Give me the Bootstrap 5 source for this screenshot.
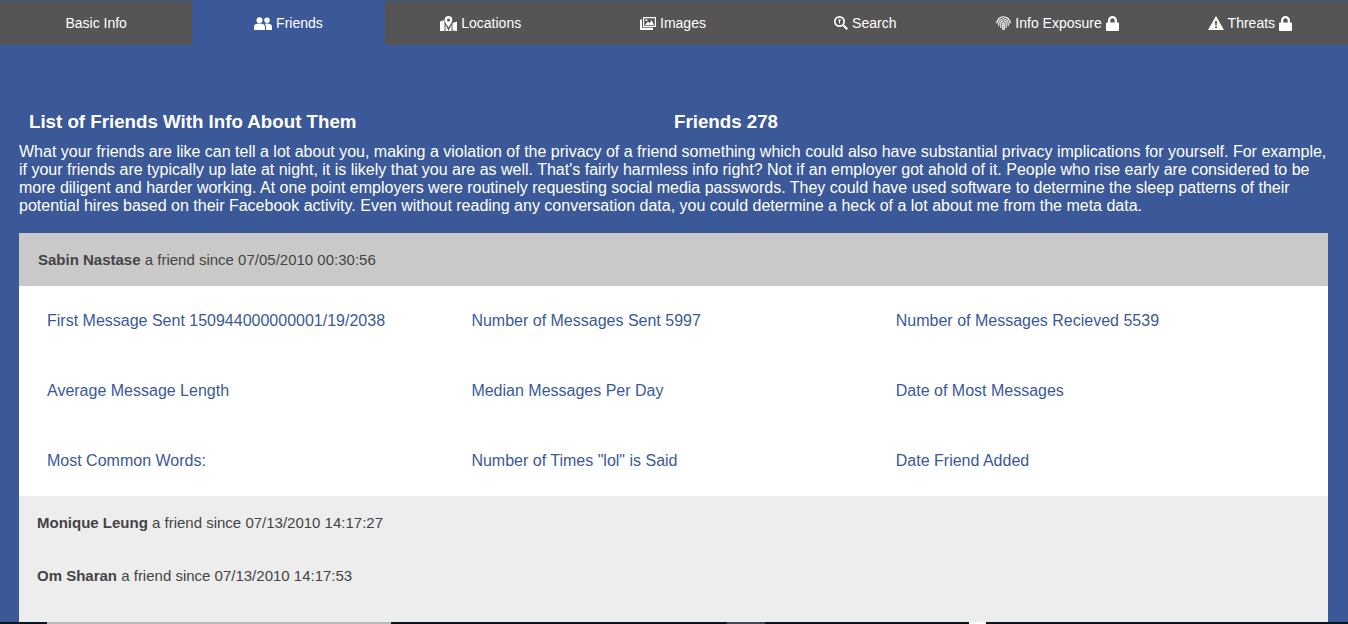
<!DOCTYPE html>
<html lang="en">
<head>
    <meta charset="UTF-8">
    <title>Friends</title>
    <link href="https://cdn.jsdelivr.net/npm/bootstrap@5.3.0/dist/css/bootstrap.min.css" rel="stylesheet">
    <style>
        html, body { height: 100%; overflow: hidden; }
        body { background: #3b5998; font-family: "Liberation Sans", Arial, sans-serif; color: #fff; }
        .top-tabs { background: #555; margin-top: 1px; height: 44px; padding-right: 2px; }
        .top-tabs a { flex: 1 1 0; color: #fff; font-size: 14px; text-decoration: none; display: flex; align-items: center; justify-content: center; gap: 4px; }
        .top-tabs a.current { background: #3b5998; }
        .top-tabs svg { fill: #fff; display: block; }
        .page-wrap { padding: 66px 20px 0 19px; }
        .page-heads { font-size: 18.72px; font-weight: 700; line-height: 21px; }
        .page-heads div:first-child { padding-left: 10px; width: 655px; }
        .intro-text { font-size: 16px; line-height: 18px; margin: 11px 0 18px; }
        .friend-open { background: #c9c9c9; color: #444; height: 53px; font-size: 15px; padding: 2px 0 0 19px; }
        .stats-box { background: #fff; color: #3b5998; font-size: 16px; padding-left: 28px; }
        .stats-box .stat-cell { width: 424.4px; height: 70px; display: flex; align-items: center; }
        .friend-closed { background: #ededed; color: #444; font-size: 15px; padding: 2px 0 0 18px; height: 53px; }
        .friend-closed.last { height: 70px; }
        .bottom-strip { position: fixed; left: 0; right: 0; bottom: 0; height: 2px; background: #08171c; display: flex; }
        .strip-a { width: 47px; }
        .strip-b { width: 344px; background: #b9bbbb; }
        .strip-c { width: 336px; }
        .strip-d { width: 38px; background: #3b4a50; }
        .strip-e { width: 204px; }
        .strip-f { width: 17px; background: #fff; }
    </style>
</head>
<body>

    <nav class="top-tabs d-flex">
        <a href="#">Basic Info</a>
        <a href="#" class="current">
            <svg width="18" height="13" viewBox="0 0 18 13"><circle cx="5.500" cy="3.200" r="3"/><circle cx="13" cy="3.200" r="2.700"/><path d="M0 13V10C0 7.500 2 6.600 5.500 6.600S11 7.500 11 10v3zM12 13V9.600c0-1.200-.4-2-1.200-2.600.7-.3 1.400-.4 2.200-.4 3 0 5 1 5 3.200V13z"/></svg>
            Friends
        </a>
        <a href="#">
            <svg width="17" height="15" viewBox="0 0 17 15"><path d="M0 5.500 4.500 4v11L0 15zM12.500 7 17 5.500V15l-4.500-.5zM5.500 8.500l3 6.500 3-6.500V15H5.500z"/><path fill-rule="evenodd" d="M8.500 0A4 4 0 0 0 4.700 4c0 2 2 4.500 3.800 7.500C10.300 8.500 12.300 6 12.300 4A4 4 0 0 0 8.500 0zm0 2.500a1.500 1.500 0 1 1 0 3 1.500 1.500 0 0 1 0-3z"/></svg>
            Locations
        </a>
        <a href="#">
            <svg width="16" height="13" viewBox="0 0 16 13"><path fill-rule="evenodd" d="M3 0h13v10H3zm1.200 1.200v7.600h10.600V1.200z"/><path d="M5 8 8 4.500l1.800 1.800L11.500 3 14 8zM5.500 2.200h1.800v1.800H5.500zM0 2.500h2v8.300h11V13H0z"/></svg>
            Images
        </a>
        <a href="#">
            <svg width="14" height="14" viewBox="0 0 14 14"><path fill-rule="evenodd" d="M5.500 0a5.500 5.500 0 1 1 0 11 5.500 5.500 0 0 1 0-11zm0 1.700a3.800 3.800 0 1 0 0 7.600 3.800 3.800 0 0 0 0-7.600z"/><path d="M8.800 10.300l1.500-1.500L14 12.500 12.500 14zM4 3.500h3v1H6v3H5v-3H4z"/></svg>
            Search
        </a>
        <a href="#">
            <svg width="15" height="16" viewBox="0 0 15 16"><path fill="none" stroke="#fff" stroke-width="1.100" d="M.8 8.500a6.700 6.700 0 0 1 13.400 0M2.800 11V8.500a4.700 4.700 0 0 1 9.400 0V11M4.800 13V8.500a2.700 2.700 0 0 1 5.400 0V13M6.800 15V8.500a.7.7 0 0 1 1.400 0V15"/></svg>
            Info Exposure
            <svg width="13" height="15" viewBox="0 0 13 15"><path fill-rule="evenodd" d="M2 6.500V4.500a4.500 4.500 0 0 1 9 0v2h1a1 1 0 0 1 1 1V14a1 1 0 0 1-1 1H1a1 1 0 0 1-1-1V7.500a1 1 0 0 1 1-1zm2.300 0h4.400V4.500a2.200 2.200 0 0 0-4.400 0z"/></svg>
        </a>
        <a href="#">
            <svg width="16" height="14" viewBox="0 0 16 14"><path fill-rule="evenodd" d="M8 0l8 14H0zM7 5l.3 4.500h1.400L9 5zm0 5.500V12h2v-1.500z"/></svg>
            Threats
            <svg width="13" height="15" viewBox="0 0 13 15"><path fill-rule="evenodd" d="M2 6.500V4.500a4.500 4.500 0 0 1 9 0v2h1a1 1 0 0 1 1 1V14a1 1 0 0 1-1 1H1a1 1 0 0 1-1-1V7.500a1 1 0 0 1 1-1zm2.300 0h4.400V4.500a2.200 2.200 0 0 0-4.400 0z"/></svg>
        </a>
    </nav>

    <div class="page-wrap">
        <div class="page-heads d-flex">
            <div>List of Friends With Info About Them</div>
            <div>Friends 278</div>
        </div>
        <p class="intro-text">What your friends are like can tell a lot about you, making a violation of the privacy of a friend something which could also have substantial privacy implications for yourself. For example, if your friends are typically up late at night, it is likely that you are as well. That's fairly harmless info right? Not if an employer got ahold of it. People who rise early are considered to be more diligent and harder working. At one point employers were routinely requesting social media passwords. They could have used software to determine the sleep patterns of their potential hires based on their Facebook activity. Even without reading any conversation data, you could determine a heck of a lot about me from the meta data.</p>

        <div class="friend-open d-flex align-items-center"><div><b>Sabin Nastase</b> a friend since 07/05/2010 00:30:56</div></div>
        <div class="stats-box d-flex flex-wrap">
            <div class="stat-cell">First Message Sent 150944000000001/19/2038</div>
            <div class="stat-cell">Number of Messages Sent 5997</div>
            <div class="stat-cell">Number of Messages Recieved 5539</div>
            <div class="stat-cell">Average Message Length</div>
            <div class="stat-cell">Median Messages Per Day</div>
            <div class="stat-cell">Date of Most Messages</div>
            <div class="stat-cell">Most Common Words:</div>
            <div class="stat-cell">Number of Times "lol" is Said</div>
            <div class="stat-cell">Date Friend Added</div>
        </div>
        <div class="friend-closed d-flex align-items-center"><div><b>Monique Leung</b> a friend since 07/13/2010 14:17:27</div></div>
        <div class="friend-closed d-flex align-items-center"><div><b>Om Sharan</b> a friend since 07/13/2010 14:17:53</div></div>
        <div class="friend-closed last"></div>
    </div>

    <div class="bottom-strip">
        <span class="strip-a"></span><span class="strip-b"></span><span class="strip-c"></span><span class="strip-d"></span><span class="strip-e"></span><span class="strip-f"></span>
    </div>

</body>
</html>
